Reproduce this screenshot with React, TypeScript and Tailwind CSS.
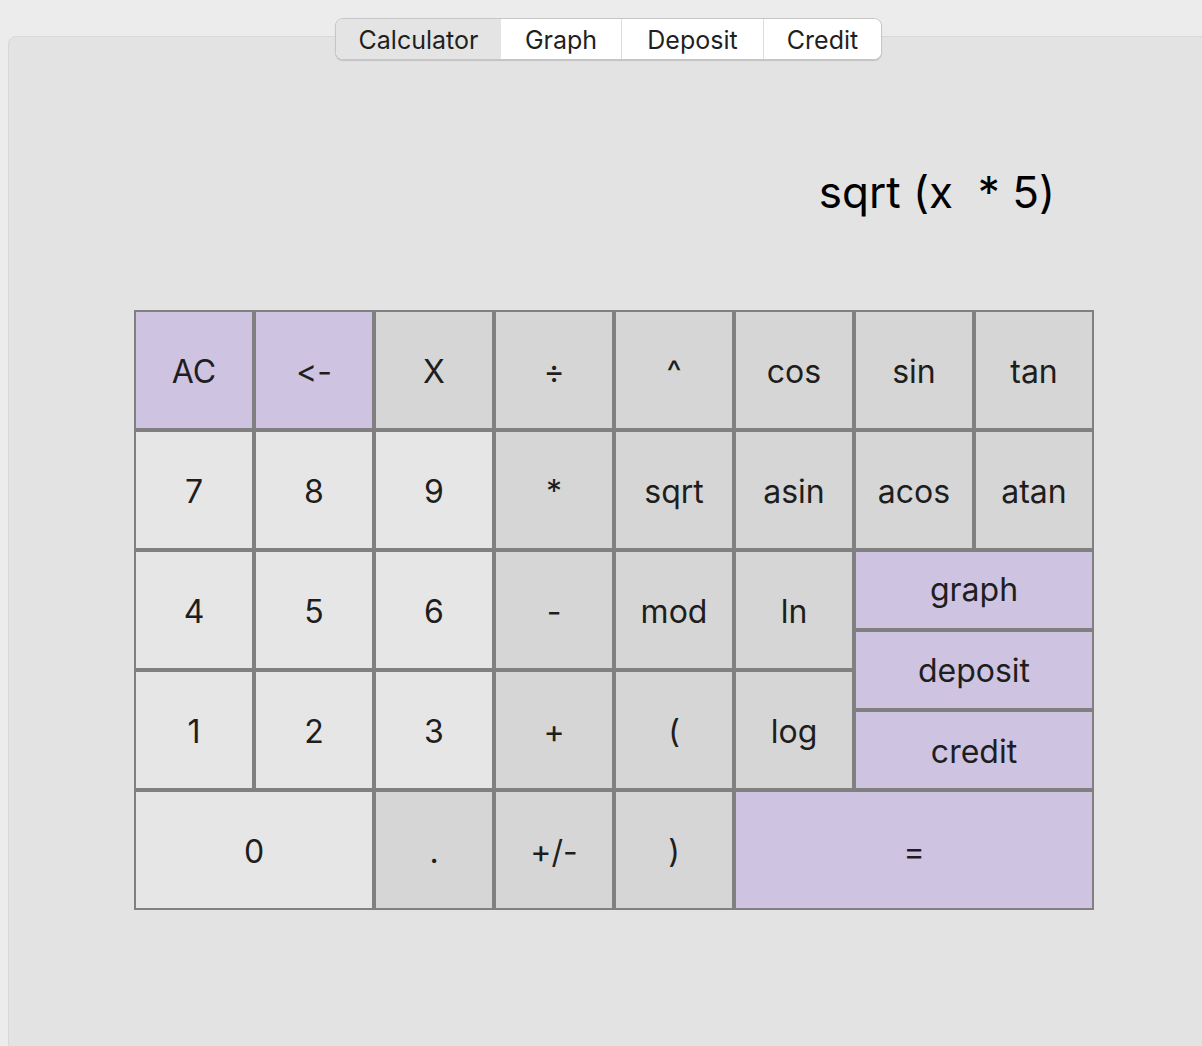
const tabs = [
  { label: "Calculator", w: "w-[165px]", active: true },
  { label: "Graph", w: "w-[120px]", active: false },
  { label: "Deposit", w: "w-[142px]", active: false },
  { label: "Credit", w: "w-[118px]", active: false },
];

type Key = { label: string; tone: "num" | "op" | "accent"; span?: string };

const keys: Key[] = [
  { label: "AC", tone: "accent" },
  { label: "<-", tone: "accent" },
  { label: "X", tone: "op" },
  { label: "÷", tone: "op" },
  { label: "^", tone: "op" },
  { label: "cos", tone: "op" },
  { label: "sin", tone: "op" },
  { label: "tan", tone: "op" },

  { label: "7", tone: "num" },
  { label: "8", tone: "num" },
  { label: "9", tone: "num" },
  { label: "*", tone: "op" },
  { label: "sqrt", tone: "op" },
  { label: "asin", tone: "op" },
  { label: "acos", tone: "op" },
  { label: "atan", tone: "op" },
];

const toneClass = {
  num: "bg-[#e6e6e6]",
  op: "bg-[#d6d6d6]",
  accent: "bg-[#cec3e1]",
};

function CalcKey({ k, className = "pt-[4px]" }: { k: Key; className?: string }) {
  return (
    <button
      className={`flex items-center justify-center border-2 border-[#808080] text-[32px] text-[#1e1e1e] ${toneClass[k.tone]} ${className}`}
    >
      {k.label}
    </button>
  );
}

export default function App() {
  return (
    <div
      className="w-[1202px] h-[1046px] overflow-hidden bg-[#ececec] pt-[36px] pl-[8px] [font-feature-settings:'calt'_0,'liga'_0]"
      style={{ fontFamily: "Inter, 'Liberation Sans', sans-serif" }}
    >
      <div className="w-[1220px] h-[1040px] bg-[#e3e3e3] border border-[#d8d8d8] rounded-tl-[8px]">
        {/* tab switcher */}
        <div className="flex ml-[326px] -mt-[19px]">
          <div className="flex h-[42px] rounded-[8px] border border-[#c6c6c6] bg-white shadow-[0_1px_1px_rgba(0,0,0,0.15)] overflow-hidden">
            {tabs.map((t, i) => (
              <div
                key={t.label}
                className={`${t.w} flex items-center justify-center pt-[3px] text-[25px] text-[#1f1f1f] ${
                  t.active ? "bg-[#e4e4e4]" : "bg-white"
                } ${i > 1 ? "border-l border-[#dcdcdc]" : ""}`}
              >
                {t.label}
              </div>
            ))}
          </div>
        </div>

        {/* display */}
        <div className="ml-[125px] w-[960px] h-[250px] flex items-center justify-end pr-[39px] pt-[14px]">
          <span className="text-[44px] text-black whitespace-pre">sqrt (x  * 5)</span>
        </div>

        {/* keypad */}
        <div className="ml-[125px] w-[960px] grid grid-cols-8 auto-rows-[120px]">
          {keys.map((k) => (
            <CalcKey key={k.label} k={k} />
          ))}

          <CalcKey k={{ label: "4", tone: "num" }} />
          <CalcKey k={{ label: "5", tone: "num" }} />
          <CalcKey k={{ label: "6", tone: "num" }} />
          <CalcKey k={{ label: "-", tone: "op" }} />
          <CalcKey k={{ label: "mod", tone: "op" }} />
          <CalcKey k={{ label: "ln", tone: "op" }} />
          <div className="col-span-2 row-span-2 flex flex-col">
            <CalcKey k={{ label: "graph", tone: "accent" }} className="h-[80px] items-start pt-[14px]" />
            <CalcKey k={{ label: "deposit", tone: "accent" }} className="h-[80px] pt-[2px]" />
            <CalcKey k={{ label: "credit", tone: "accent" }} className="h-[80px] items-end pb-[12px]" />
          </div>

          <CalcKey k={{ label: "1", tone: "num" }} />
          <CalcKey k={{ label: "2", tone: "num" }} />
          <CalcKey k={{ label: "3", tone: "num" }} />
          <CalcKey k={{ label: "+", tone: "op" }} />
          <CalcKey k={{ label: "(", tone: "op" }} />
          <CalcKey k={{ label: "log", tone: "op" }} />

          <CalcKey k={{ label: "0", tone: "num" }} className="col-span-2 pt-[4px]" />
          <CalcKey k={{ label: ".", tone: "op" }} />
          <CalcKey k={{ label: "+/-", tone: "op" }} />
          <CalcKey k={{ label: ")", tone: "op" }} />
          <CalcKey k={{ label: "=", tone: "accent" }} className="col-span-3 pt-[4px]" />
        </div>
      </div>
    </div>
  );
}
